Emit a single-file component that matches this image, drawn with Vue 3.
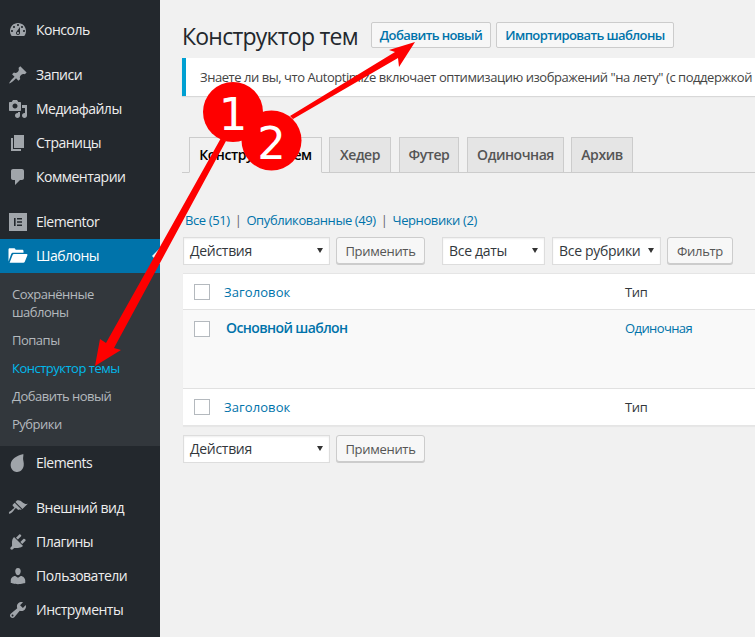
<script setup>
const P = {
  dash: 'M3.76 16h12.48c1.1-1.37 1.76-3.11 1.76-5 0-4.42-3.58-8-8-8s-8 3.58-8 8c0 1.89.66 3.63 1.76 5zM10 4c.55 0 1 .45 1 1s-.45 1-1 1-1-.45-1-1 .45-1 1-1zM6 6c.55 0 1 .45 1 1s-.45 1-1 1-1-.45-1-1 .45-1 1-1zm8 0c.55 0 1 .45 1 1s-.45 1-1 1-1-.45-1-1 .45-1 1-1zm-5.37 5.55L12 7v6c0 1.1-.9 2-2 2s-2-.9-2-2c0-.57.24-1.08.63-1.45zM4 10c.55 0 1 .45 1 1s-.45 1-1 1-1-.45-1-1 .45-1 1-1zm12 0c.55 0 1 .45 1 1s-.45 1-1 1-1-.45-1-1 .45-1 1-1zm-5 3c0-.55-.45-1-1-1s-1 .45-1 1 .45 1 1 1 1-.45 1-1z',
  pin: 'M10.44 3.02l1.82-1.82 6.36 6.35-1.83 1.82c-1.05-.68-2.48-.57-3.41.36l-.75.75c-.92.93-1.04 2.35-.35 3.41l-1.83 1.82-2.41-2.41-2.8 2.79c-.42.42-3.38 2.71-3.8 2.29s1.86-3.39 2.28-3.81l2.79-2.79L4.1 9.36l1.83-1.82c1.05.69 2.48.57 3.4-.36l.75-.75c.93-.92 1.05-2.35.36-3.41z',
  media: 'M13 11V4c0-.55-.45-1-1-1h-1.67L9 1H5L3.67 3H2c-.55 0-1 .45-1 1v7c0 .55.45 1 1 1h10c.55 0 1-.45 1-1zM7 4.5c1.38 0 2.5 1.12 2.5 2.5S8.38 9.5 7 9.5 4.5 8.38 4.5 7 5.62 4.5 7 4.5zM14 6h5v10.5c0 1.38-1.12 2.5-2.5 2.5S14 17.88 14 16.5s1.12-2.5 2.5-2.5c.17 0 .34.02.5.05V9h-3V6zm-4 8.05V13h2v3.5c0 1.38-1.12 2.5-2.5 2.5S7 17.88 7 16.5 8.12 14 9.5 14c.17 0 .34.02.5.05z',
  page: 'M6 15V2h10v13H6zm-1 1h8v2H3V5h2v11z',
  comment: 'M5 2h9c1.1 0 2 .9 2 2v7c0 1.1-.9 2-2 2h-2l-5 5v-5H5c-1.1 0-2-.9-2-2V4c0-1.1.9-2 2-2z',
  elementor: 'M1 1h18v18H1zM6 6v8h1.6V6zM9 6v1.6h5V6zM9 9.2v1.6h5V9.2zM9 12.4V14h5v-1.6z',
  leaf: 'M15.5 1C11 2 5 4.5 3.2 9c-1.4 3.6-.2 8.6 4.3 9.8 4 1 7.5-1.8 8.2-6 .5-3.4-.8-5.5-.6-7.2.1-1.5.4-3.6.4-5.6z',
  brush: 'M14.48 11.06L7.41 3.99l1.5-1.5c.5-.56 2.3-.47 3.51.32 1.21.8 1.43 1.28 2.91 2.1 1.18.64 2.45 1.26 4.45.85zm-.71.71L6.7 4.7 4.93 6.47c-.39.39-.39 1.02 0 1.41l1.06 1.06c.39.39.39 1.03 0 1.42-.6.6-1.43 1.11-2.21 1.69-.35.26-.7.53-1.01.84C1.43 13.23.4 14.75 1.1 15.45c.7.7 2.22-.33 3.56-1.67.31-.31.58-.66.85-1.01.58-.78 1.09-1.61 1.69-2.21.39-.39 1.02-.39 1.41 0l1.06 1.06c.39.39 1.02.39 1.41 0z',
  plugin: 'M13.11 4.36L9.87 7.6 8 5.73l3.24-3.24c.35-.34 1.05-.2 1.56.32.52.51.66 1.21.31 1.55zm-8 1.77l.91-1.12 9.01 9.01-1.19.84c-.71.71-2.63 1.16-3.82 1.16H6.14L4.9 17.26c-.59.59-1.54.59-2.12 0-.59-.58-.59-1.53 0-2.12l1.24-1.24v-3.88c0-1.13.4-3.19 1.09-3.89zm7.26 3.97l3.24-3.24c.34-.35 1.04-.21 1.55.31.52.51.66 1.21.31 1.55l-3.24 3.25z',
  users: 'M10 9.25c-2.27 0-2.73-3.44-2.73-3.44C7 4.02 7.82 2 9.97 2c2.16 0 2.98 2.02 2.71 3.81 0 0-.41 3.44-2.68 3.44zm0 2.57L12.72 10c2.39 0 4.52 2.33 4.52 4.53v2.49s-3.65 1.13-7.24 1.13c-3.65 0-7.24-1.13-7.24-1.13v-2.49c0-2.25 1.94-4.48 4.47-4.48z',
  tools: 'M16.68 9.77c-1.34 1.34-3.3 1.67-4.95.99l-5.41 6.52c-.99.99-2.59.99-3.58 0s-.99-2.59 0-3.57l6.52-5.42c-.68-1.65-.35-3.61.99-4.95 1.28-1.28 3.12-1.62 4.72-1.06l-2.89 2.89 2.82 2.82 2.86-2.87c.53 1.58.18 3.39-1.08 4.65zM3.81 16.21c.4.39 1.04.39 1.43 0 .4-.4.4-1.04 0-1.43-.39-.4-1.03-.4-1.43 0-.39.39-.39 1.03 0 1.43z',
  folder: 'M.5 15.5V3.6c0-.9.6-1.4 1.4-1.4h4c.8 0 1.2.3 1.5 1l.3.6h6.4c.8 0 1.4.5 1.4 1.3v1.7H5.2c-1 0-1.6.4-2 1.2zM1.6 16.8 4.6 9c.2-.6.7-.9 1.4-.9h12.6c.7 0 1 .5.8 1.1l-2.6 6.6c-.3.7-.8 1-1.5 1z'
}
const groupA = [{ t: 'Консоль', i: 'dash' }]
const groupB = [
  { t: 'Записи', i: 'pin' },
  { t: 'Медиафайлы', i: 'media' },
  { t: 'Страницы', i: 'page' },
  { t: 'Комментарии', i: 'comment' }
]
const groupD = [
  { t: 'Внешний вид', i: 'brush' },
  { t: 'Плагины', i: 'plugin' },
  { t: 'Пользователи', i: 'users' },
  { t: 'Инструменты', i: 'tools' }
]
const sub = [
  { t: 'Сохранённые шаблоны' },
  { t: 'Попапы' },
  { t: 'Конструктор темы', cur: true },
  { t: 'Добавить новый' },
  { t: 'Рубрики' }
]
const tabs = ['Конструктор тем', 'Хедер', 'Футер', 'Одиночная', 'Архив']
</script>

<template>
  <div class="page">
    <aside class="side">
      <a v-for="m in groupA" :key="m.t" class="item">
        <svg class="ic" viewBox="0 0 20 20"><path :d="P[m.i]" fill-rule="evenodd" /></svg>{{ m.t }}
      </a>
      <div class="sep"></div>
      <a v-for="m in groupB" :key="m.t" class="item">
        <svg class="ic" viewBox="0 0 20 20"><path :d="P[m.i]" fill-rule="evenodd" /></svg>{{ m.t }}
      </a>
      <div class="sep"></div>
      <a class="item">
        <svg class="ic" viewBox="0 0 20 20"><path :d="P.elementor" fill-rule="evenodd" /></svg>Elementor
      </a>
      <a class="item active">
        <svg class="ic" viewBox="0 0 20 20"><path :d="P.folder" /></svg>Шаблоны
        <span class="notch"></span>
      </a>
      <ul class="sub">
        <li v-for="s in sub" :key="s.t" :class="{ cur: s.cur }">{{ s.t }}</li>
      </ul>
      <a class="item">
        <svg class="ic" viewBox="0 0 20 20"><path :d="P.leaf" /></svg>Elements
      </a>
      <div class="sep"></div>
      <a v-for="m in groupD" :key="m.t" class="item">
        <svg class="ic" viewBox="0 0 20 20"><path :d="P[m.i]" fill-rule="evenodd" /></svg>{{ m.t }}
      </a>
    </aside>

    <main class="main">
      <header class="head">
        <h1>Конструктор тем</h1>
        <a class="act first">Добавить новый</a>
        <a class="act">Импортировать шаблоны</a>
      </header>
      <div class="notice">Знаете ли вы, что Autoptimize включает оптимизацию изображений "на лету" (с поддержкой</div>

      <nav class="tabs">
        <a v-for="(t, i) in tabs" :key="t" class="tab" :class="{ on: i === 0 }">{{ t }}</a>
      </nav>

      <div class="filters">
        <a>Все (51)</a><i>|</i><a>Опубликованные (49)</a><i>|</i><a>Черновики (2)</a>
      </div>

      <div class="bar">
        <div class="sel w-act">Действия<b></b></div>
        <button class="btn apply">Применить</button>
        <div class="sel w-date">Все даты<b></b></div>
        <div class="sel w-cat">Все рубрики<b></b></div>
        <button class="btn filter">Фильтр</button>
      </div>

      <div class="table">
        <div class="row hd">
          <span class="cb"></span>
          <a class="c-title">Заголовок</a>
          <span class="c-type">Тип</span>
        </div>
        <div class="row body">
          <span class="cb"></span>
          <a class="c-title strong">Основной шаблон</a>
          <a class="c-type">Одиночная</a>
        </div>
        <div class="row ft">
          <span class="cb"></span>
          <a class="c-title">Заголовок</a>
          <span class="c-type">Тип</span>
        </div>
      </div>

      <div class="bar bottom">
        <div class="sel w-act">Действия<b></b></div>
        <button class="btn apply">Применить</button>
      </div>
    </main>

    <svg class="marks" viewBox="0 0 755 637" width="755" height="637">
      <g fill="#fe0000">
        <polygon points="221,138 226,141 114,348 121,350 95,366 100,339 106,343" />
        <polygon points="290,116 293,119 398,58 399,67 415,42 389,50 395,52" />
        <circle cx="233" cy="112" r="30" />
        <circle cx="271.5" cy="140.5" r="30" />
      </g>
      <text x="233" y="130" class="num">1</text>
      <text x="271.5" y="159" class="num">2</text>
    </svg>
  </div>
</template>

<style>
html, body { margin: 0; padding: 0; overflow: hidden; background: #f1f1f1; }
</style>

<style scoped>
.page {
  position: relative;
  display: flex;
  width: 755px;
  height: 637px;
  overflow: hidden;
  background: #f1f1f1;
  font-family: "Open Sans", sans-serif;
  font-size: 13px;
  letter-spacing: -0.3px;
  color: #444;
}
.side {
  width: 160px;
  flex: none;
  background: #23282d;
  padding-top: 13px;
  box-sizing: border-box;
}
.item {
  position: relative;
  display: flex;
  align-items: center;
  height: 34px;
  padding-bottom: 2px;
  box-sizing: border-box;
  color: #eee;
  font-size: 14px;
  letter-spacing: -0.5px;
}
.ic {
  width: 20px;
  height: 20px;
  margin: 1px 8px 0 8px;
  fill: #a0a5aa;
  flex: none;
}
.sep { height: 11px; }
.active { background: #0073aa; color: #fff; }
.active .ic { fill: #fff; }
.notch {
  position: absolute;
  right: 0;
  top: 9px;
  border: 8px solid transparent;
  border-right-color: #f1f1f1;
  border-left-width: 0;
}
.sub {
  list-style: none;
  margin: 0;
  padding: 7px 0 8px;
  background: #32373c;
  color: #b4b9be;
  font-size: 13px;
  line-height: 18px;
  letter-spacing: -0.5px;
}
.sub li { padding: 5px 12px; }
.sub li:first-child { padding-right: 30px; }
.sub .cur { color: #00b9eb; }

.main { flex: 1; min-width: 0; padding-left: 23px; }
.head { display: flex; align-items: flex-start; height: 58px; padding-top: 22px; box-sizing: border-box; }
h1 {
  margin: 0 0 0 -1px;
  width: 176px;
  font-size: 23px;
  font-weight: 400;
  color: #23282d;
  line-height: 28px;
  letter-spacing: -0.75px;
  white-space: nowrap;
}
.act {
  height: 26px;
  line-height: 24px;
  box-sizing: border-box;
  border: 1px solid #ccc;
  border-radius: 2px;
  background: #f7f7f7;
  color: #0073aa;
  font-weight: 600;
  letter-spacing: -0.6px;
  text-align: center;
  margin-left: 5px;
  width: 178px;
  white-space: nowrap;
}
.act.first { margin-left: 13px; width: 120px; }
.notice {
  margin-left: -1px;
  height: 38px;
  line-height: 38px;
  box-sizing: border-box;
  background: #fff;
  border-left: 4px solid #00a0d2;
  box-shadow: 0 1px 1px rgba(0, 0, 0, .1);
  padding-left: 14px;
  letter-spacing: -0.45px;
  white-space: nowrap;
  overflow: hidden;
  color: #444;
}
.tabs {
  display: flex;
  margin: 41px 0 0 -1px;
  padding-left: 7px;
  height: 36px;
  box-sizing: border-box;
  border-bottom: 1px solid #ccc;
}
.tab {
  height: 36px;
  line-height: 34px;
  box-sizing: border-box;
  border: 1px solid #ccc;
  background: #e5e5e5;
  color: #555;
  font-size: 14px;
  font-weight: 600;
  letter-spacing: -0.45px;
  text-align: center;
  white-space: nowrap;
  margin-right: 7px;
  width: 62px;
}
.tab:nth-child(1) { width: 133px; }
.tab:nth-child(3) { width: 60px; margin-left: 1px; }
.tab:nth-child(4) { width: 97px; margin-left: 1px; }
.tab.on { background: #f1f1f1; color: #000; border-bottom-color: #f1f1f1; }
.filters {
  margin: 38px 0 0 2px;
  height: 18px;
  line-height: 18px;
  color: #0073aa;
  letter-spacing: -0.4px;
  white-space: nowrap;
}
.filters i { font-style: normal; color: #666; margin: 0 5px 0 5px; }
.bar { display: flex; height: 28px; margin-top: 8px; align-items: flex-start; }
.sel {
  position: relative;
  height: 28px;
  line-height: 26px;
  box-sizing: border-box;
  border: 1px solid #ddd;
  background: #fff;
  color: #32373c;
  padding-left: 6px;
  font-size: 14px;
  box-shadow: inset 0 1px 2px rgba(0, 0, 0, .07);
  white-space: nowrap;
}
.sel b {
  position: absolute;
  right: 6px;
  top: 10px;
  border: 3px solid transparent;
  border-top: 5px solid #333;
  border-bottom-width: 0;
}
.w-act { width: 147px; }
.w-date { width: 103px; margin-left: 17px; }
.w-cat { width: 109px; margin-left: 7px; }
.btn {
  height: 27px;
  box-sizing: border-box;
  border: 1px solid #ccc;
  border-radius: 3px;
  background: #f7f7f7;
  box-shadow: 0 1px 0 #ccc;
  color: #555;
  font: 13px "Open Sans", sans-serif;
  letter-spacing: -0.3px;
  padding: 0;
}
.apply { width: 89px; margin-left: 6px; }
.filter { width: 66px; margin-left: 6px; }
.table {
  margin-top: 8px;
  background: #fff;
  border-top: 1px solid #e5e5e5;
  box-shadow: 0 1px 1px rgba(0, 0, 0, .04);
  border-bottom: 1px solid #e5e5e5;
}
.row {
  display: grid;
  grid-template-columns: 41px 401px 1fr;
  align-items: center;
  color: #32373c;
  font-size: 13px;
}
.cb {
  width: 16px;
  height: 16px;
  box-sizing: border-box;
  border: 1px solid #b4b9be;
  margin-left: 11px;
  background: #fff;
}
.c-title { color: #0073aa; letter-spacing: 0.1px; }
.hd { height: 35px; border-bottom: 1px solid #e1e1e1; }
.body {
  height: 78px;
  background: #f9f9f9;
  align-items: start;
  padding-top: 9px;
  box-sizing: border-box;
}
.body .cb { margin-top: 2px; }
.strong { font-weight: 600; font-size: 14px; margin-left: 2px; line-height: 18px; letter-spacing: -0.6px; }
.body .c-type { line-height: 18px; color: #0073aa; letter-spacing: -0.6px; }
.ft { height: 36px; border-top: 1px solid #e1e1e1; }
.bottom { margin-top: 9px; }

.marks { position: absolute; left: 0; top: 0; pointer-events: none; }
.num {
  fill: #fff;
  font-family: "DejaVu Sans", sans-serif;
  font-size: 45px;
  letter-spacing: 0;
  text-anchor: middle;
}
</style>
